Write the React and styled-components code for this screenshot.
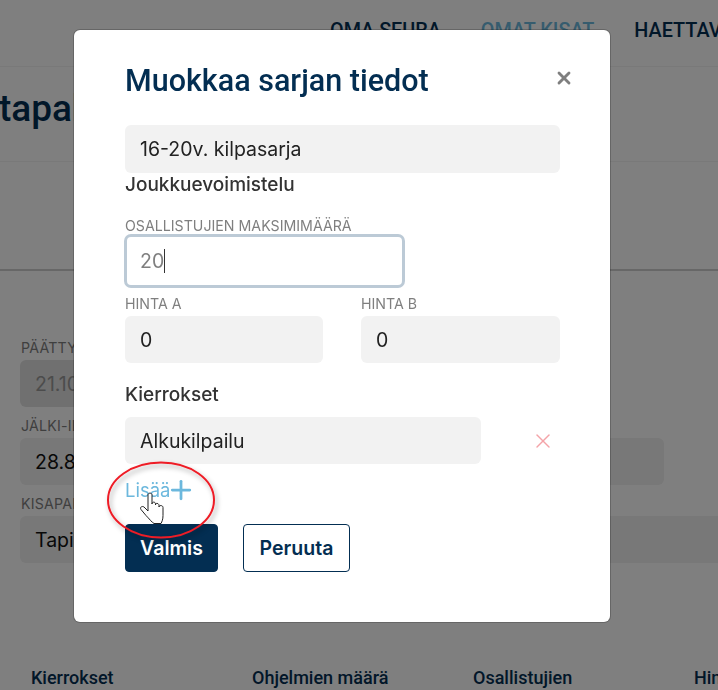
import React from 'react'
import styled, { createGlobalStyle } from 'styled-components'
import { X, Plus } from 'lucide-react'

const Global = createGlobalStyle`
  html, body {
    margin: 0;
    height: 100%;
    background: #fff;
    overflow: hidden;
    font-family: "Inter", "Liberation Sans", sans-serif;
  }
`

const Page = styled.div`
  width: 718px;
  height: 690px;
  overflow: hidden;
  display: flex;
  flex-direction: column;
`
const Nav = styled.nav`
  height: 67px;
  flex: none;
  border-bottom: 1px solid #f2f2f2;
  padding: 0 0 5px 330px;
  display: flex;
  gap: 40px;
  align-items: center;
  white-space: nowrap;
  box-sizing: border-box;
`
const NavItem = styled.span`
  font-family: "Roboto", sans-serif;
  font-size: 19.8px;
  font-weight: 500;
  color: ${p => (p.$active ? '#6cb8dd' : '#032e52')};
`
const TitleBar = styled.div`
  height: 95px;
  flex: none;
  box-sizing: border-box;
  padding-top: 19px;
  border-bottom: 1px solid #f2f2f2;
`
const PageTitle = styled.h1`
  margin: 0 0 0 -1px;
  font-family: "Roboto", sans-serif;
  font-size: 37px;
  line-height: 46px;
  font-weight: 500;
  color: #032e52;
  white-space: nowrap;
`
const TabSpace = styled.div`
  height: 109px;
  flex: none;
  box-sizing: border-box;
  border-bottom: 2px solid #cfcfcf;
`
const Fields = styled.div`
  padding: 69px 0 0 20px;
  display: flex;
  flex-direction: column;
  gap: 11px;
  flex: none;
`
const BgField = styled.div`
  display: flex;
  flex-direction: column;
  gap: 4px;
`
const BgLabel = styled.span`
  margin-left: 1px;
  font-size: 14.2px;
  line-height: 16px;
  letter-spacing: 0.2px;
  color: #7f7f7f;
  white-space: nowrap;
`
const BgInput = styled.div`
  height: 47px;
  width: ${p => p.$w}px;
  box-sizing: border-box;
  padding: 0 15px;
  display: flex;
  align-items: center;
  border-radius: 6px;
  background: ${p => (p.$off ? '#e0e0e0' : '#f0f0f0')};
  color: ${p => (p.$off ? '#999' : '#111')};
  font-size: 19.5px;
`
const TableHead = styled.div`
  margin-top: 104px;
  padding-left: 31px;
  display: grid;
  grid-template-columns: 221px 221px 221px 100px;
  flex: none;
`
const HeadCell = styled.span`
  font-family: "Roboto", sans-serif;
  font-size: 18px;
  font-weight: 500;
  color: #032e52;
  white-space: nowrap;
`

const Backdrop = styled.div`
  position: fixed;
  inset: 0;
  background: rgba(0, 0, 0, 0.5);
`
const Modal = styled.div`
  position: fixed;
  left: 74px;
  top: 30px;
  width: 536px;
  height: 592px;
  box-sizing: border-box;
  padding: 32px 50px 0 51px;
  background: #fff;
  border-radius: 6px;
  box-shadow: 0 0 0 1px rgba(0, 0, 0, 0.2);
  display: flex;
  flex-direction: column;
`
const ModalHead = styled.div`
  display: flex;
  align-items: center;
  justify-content: space-between;
  height: 36px;
  margin-bottom: 27px;
`
const ModalTitle = styled.h2`
  margin: 0;
  font-family: "Roboto", sans-serif;
  font-size: 30.5px;
  font-weight: 500;
  color: #032e52;
`
const CloseBtn = styled.button`
  border: 0;
  background: none;
  padding: 0;
  margin: 0 -14px 4px 0;
  width: 20px;
  height: 20px;
  display: flex;
  color: #7f7f7f;
`
const TextInput = styled.div`
  height: ${p => p.$h || 47}px;
  width: ${p => (p.$w ? `${p.$w}px` : 'auto')};
  margin-top: ${p => p.$top || 0}px;
  box-sizing: border-box;
  border-radius: 6px;
  background: #f2f2f2;
  padding: 0 15px;
  display: flex;
  align-items: center;
  font-size: 19.5px;
  color: #222;
`
const SubHead = styled.div`
  margin-top: ${p => p.$top || 0}px;
  margin-bottom: ${p => p.$bottom || 0}px;
  font-size: 19px;
  line-height: 24px;
  font-weight: 500;
  color: #333;
`
const Label = styled.div`
  margin-top: ${p => p.$top || 0}px;
  font-size: 14.2px;
  line-height: 16px;
  color: #7f7f7f;
  white-space: nowrap;
`
const FocusInput = styled.div`
  width: 281px;
  height: 54px;
  margin: 0 0 8px -1px;
  box-sizing: border-box;
  border: 3px solid #bccad6;
  border-radius: 7px;
  padding: 0 13px;
  display: flex;
  align-items: center;
  font-size: 19.5px;
  color: #7f7f7f;
`
const Caret = styled.span`
  width: 1px;
  height: 24px;
  background: #333;
`
const PriceRow = styled.div`
  display: grid;
  grid-template-columns: 198px 199px;
  column-gap: 38px;
`
const RoundRow = styled.div`
  display: flex;
  align-items: center;
  gap: 50px;
`
const AddLink = styled.a`
  display: flex;
  align-items: center;
  height: 24px;
  margin-top: 14px;
  font-size: 18.5px;
  color: #6cb8dd;
`
const PlusIcon = styled(Plus)`
  margin-left: -4px;
  flex: none;
`
const Buttons = styled.div`
  display: flex;
  gap: 25px;
  margin-top: 22px;
`
const Button = styled.button`
  height: 48px;
  box-sizing: border-box;
  border-radius: 4px;
  border: 1px solid #032e52;
  padding: 0;
  width: ${p => p.$w}px;
  font-family: "Inter", sans-serif;
  font-size: 19.5px;
  font-weight: 600;
  color: ${p => (p.$primary ? '#fff' : '#032e52')};
  background: ${p => (p.$primary ? '#032e52' : '#fff')};
`
const Note = styled.svg`
  position: fixed;
  left: 100px;
  top: 455px;
  pointer-events: none;
`

const App = () => {
  return (
    <>
      <Global />
      <Page>
        <Nav>
          <NavItem>OMA SEURA</NavItem>
          <NavItem $active>OMAT KISAT</NavItem>
          <NavItem>HAETTAVAT</NavItem>
        </Nav>
        <TitleBar>
          <PageTitle>tapahtuma</PageTitle>
        </TitleBar>
        <TabSpace />
        <Fields>
          <BgField>
            <BgLabel>PÄÄTTYY</BgLabel>
            <BgInput $w={300} $off>21.10.2022</BgInput>
          </BgField>
          <BgField>
            <BgLabel>JÄLKI-ILMOITTAUTUMINEN</BgLabel>
            <BgInput $w={644}>28.8.2022</BgInput>
          </BgField>
          <BgField>
            <BgLabel>KISAPAIKKA</BgLabel>
            <BgInput $w={720}>Tapiola</BgInput>
          </BgField>
        </Fields>
        <TableHead>
          <HeadCell>Kierrokset</HeadCell>
          <HeadCell>Ohjelmien määrä</HeadCell>
          <HeadCell>Osallistujien</HeadCell>
          <HeadCell>Hinta</HeadCell>
        </TableHead>
      </Page>
      <Backdrop />
      <Modal>
        <ModalHead>
          <ModalTitle>Muokkaa sarjan tiedot</ModalTitle>
          <CloseBtn><X size={20} strokeWidth={3.4} /></CloseBtn>
        </ModalHead>
        <TextInput $h={48}>16-20v. kilpasarja</TextInput>
        <SubHead>Joukkuevoimistelu</SubHead>
        <Label $top={21}>OSALLISTUJIEN MAKSIMIMÄÄRÄ</Label>
        <FocusInput>20<Caret /></FocusInput>
        <PriceRow>
          <div>
            <Label>HINTA A</Label>
            <TextInput $top={4}>0</TextInput>
          </div>
          <div>
            <Label>HINTA B</Label>
            <TextInput $top={4}>0</TextInput>
          </div>
        </PriceRow>
        <SubHead $top={20} $bottom={10}>Kierrokset</SubHead>
        <RoundRow>
          <TextInput $w={356}>Alkukilpailu</TextInput>
          <X size={24} color="#f4a3a8" strokeWidth={1.4} />
        </RoundRow>
        <AddLink>Lisää<PlusIcon size={30} strokeWidth={2.2} /></AddLink>
        <Buttons>
          <Button $primary $w={93}>Valmis</Button>
          <Button $w={107}>Peruuta</Button>
        </Buttons>
      </Modal>
      <Note width="130" height="100" viewBox="0 0 130 100">
        <defs>
          <filter id="soft" x="-20%" y="-20%" width="140%" height="140%">
            <feDropShadow dx="2" dy="3" stdDeviation="2.5" floodColor="#000" floodOpacity="0.35" />
          </filter>
        </defs>
        <ellipse cx="61" cy="45" rx="53" ry="37.5" fill="none" stroke="#ee1c25" strokeWidth="2" filter="url(#soft)" />
        <path
          d="M48 56V40c0-2.5 4-2.5 4 0v9c0-2.5 3.5-2.5 3.5 0v1c0-2.5 3.5-2 3.5.5v1.5c0-2 4-2 4 .5v8c0 4-1 6-2 8H54c-2-1-5-5-8-8l-5-6c-1.5-2 1-4 3-2.5z"
          fill="#fff"
          stroke="#222"
          strokeWidth="1"
          strokeLinejoin="round"
        />
      </Note>
    </>
  )
}

export default App
